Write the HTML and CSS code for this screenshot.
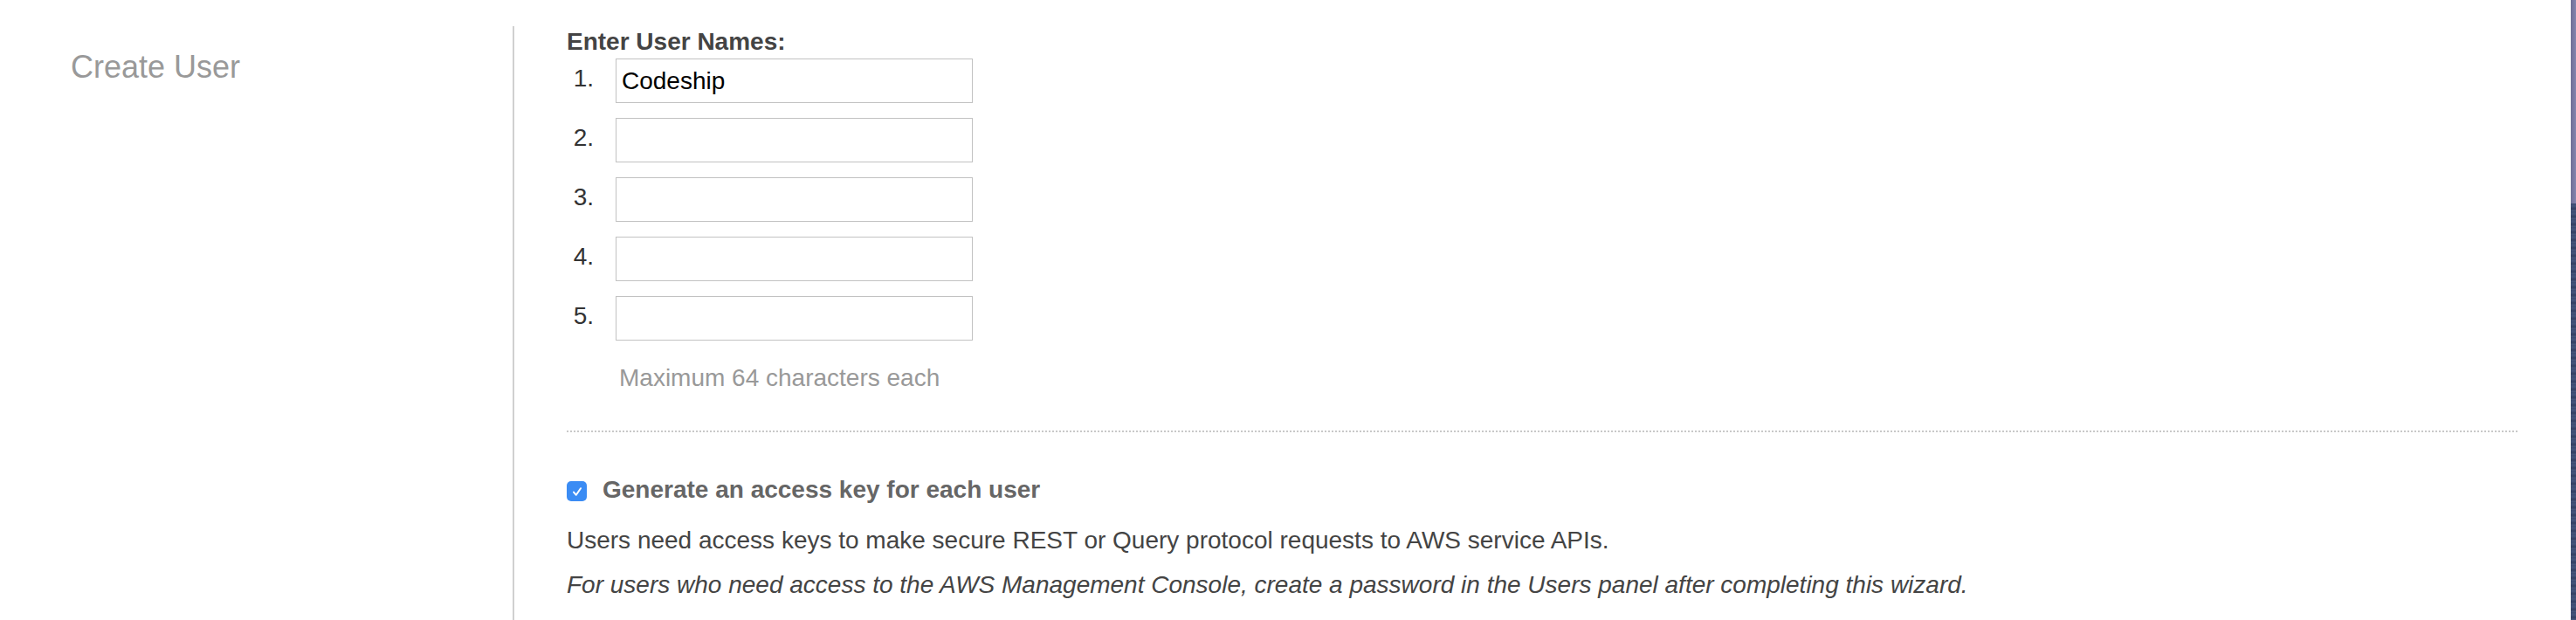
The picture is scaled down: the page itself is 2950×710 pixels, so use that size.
FILE: index.html
```html
<!DOCTYPE html>
<html>
<head>
<meta charset="utf-8">
<link rel="stylesheet" href="styles.css">
</head>
<body>
<div class="page">
  <div class="main">
    <div class="side">
      <h2 class="side-title">Create User</h2>
    </div>
    <div class="content">
      <div class="label">Enter User Names:</div>
      <ol class="names">
        <li class="name-row"><span class="num">1.</span><input class="name-input" type="text" value="Codeship"></li>
        <li class="name-row"><span class="num">2.</span><input class="name-input" type="text"></li>
        <li class="name-row"><span class="num">3.</span><input class="name-input" type="text"></li>
        <li class="name-row"><span class="num">4.</span><input class="name-input" type="text"></li>
        <li class="name-row"><span class="num">5.</span><input class="name-input" type="text"></li>
      </ol>
      <div class="hint">Maximum 64 characters each</div>
      <div class="divider"></div>
      <label class="check-row">
        <span class="check-box"><svg width="14" height="14" viewBox="0 0 14 14"><path d="M3 7.6 L5.8 10.8 L11 3.2" fill="none" stroke="#fff" stroke-width="2" stroke-linecap="round" stroke-linejoin="round"/></svg></span>
        <span class="check-label">Generate an access key for each user</span>
      </label>
      <p class="info">Users need access keys to make secure REST or Query protocol requests to AWS service APIs.</p>
      <p class="info italic">For users who need access to the AWS Management Console, create a password in the Users panel after completing this wizard.</p>
    </div>
  </div>
  <div class="edge">
    <div class="edge-top"></div>
    <div class="edge-bottom"></div>
  </div>
</div>
</body>
</html>
```

FILE: styles.css
```css
html, body {
  margin: 0;
  padding: 0;
  background: #fff;
}
body {
  font-family: "Liberation Sans", Arial, Helvetica, sans-serif;
  font-size: 28px;
  line-height: 32px;
  color: #444;
}
.page {
  display: flex;
  width: 2950px;
  height: 710px;
  overflow: hidden;
}
.main {
  flex: 1;
  display: flex;
  padding-top: 30px;
  min-width: 0;
}
.side {
  width: 587px;
  flex: none;
  box-sizing: border-box;
  padding-left: 81px;
}
.side-title {
  margin: 27px 0 0 0;
  font-size: 36px;
  line-height: 40px;
  font-weight: normal;
  color: #999;
}
.content {
  flex: 1;
  border-left: 2px solid #d0d0d0;
  padding: 2px 61px 0 60px;
  min-width: 0;
}
.label {
  font-weight: bold;
  color: #444;
}
.names {
  list-style: none;
  margin: 3px 0 0 0;
  padding: 0;
  display: flex;
  flex-direction: column;
  gap: 17px;
}
.name-row {
  display: flex;
  align-items: center;
  gap: 25px;
}
.num {
  width: 31px;
  text-align: right;
  color: #333;
  padding-bottom: 5px;
}
.name-input {
  width: 409px;
  height: 51px;
  box-sizing: border-box;
  border: 1px solid #c2c2c2;
  border-radius: 0;
  padding: 0 6px;
  margin: 0;
  font-family: "Liberation Sans", Arial, Helvetica, sans-serif;
  font-size: 28px;
  color: #000;
  background: #fff;
  outline: none;
}
.hint {
  margin: 27px 0 0 60px;
  color: #999;
}
.divider {
  margin-top: 44px;
  border-top: 2px dotted #c8c8c8;
}
.check-row {
  display: flex;
  align-items: center;
  gap: 18px;
  margin-top: 50px;
}
.check-box {
  width: 23px;
  height: 23px;
  border-radius: 5px;
  background: #3b8cf4;
  display: flex;
  align-items: center;
  justify-content: center;
  margin-top: 3px;
}
.check-label {
  font-weight: bold;
  color: #666;
}
.info {
  margin: 26px 0 0 0;
  color: #444;
}
.info.italic {
  font-style: italic;
  margin-top: 19px;
}
.edge {
  width: 6px;
  flex: none;
  display: flex;
  flex-direction: column;
}
.edge-top {
  height: 233px;
  background: linear-gradient(90deg, #6e6e96, #8485ae);
}
.edge-bottom {
  flex: 1;
  background: repeating-linear-gradient(180deg, #3b4a70 0px, #45557c 3px, #323f62 6px, #4a5a80 9px);
}
```
